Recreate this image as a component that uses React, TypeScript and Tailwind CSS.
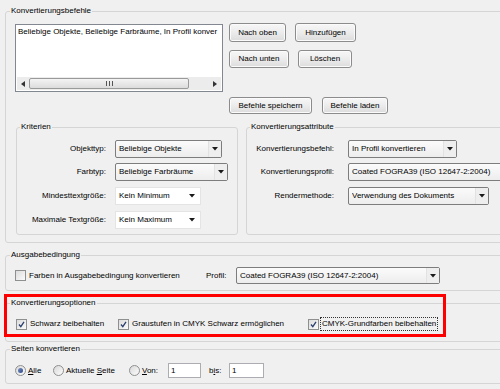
import type { ReactNode } from "react";

function Group({
  title,
  className,
  legendClass,
  children,
}: {
  title: string;
  className: string;
  legendClass: string;
  children?: ReactNode;
}) {
  return (
    <fieldset className={"shrink-0 border border-[#d5d5d5] rounded-[3px] " + className}>
      <legend className={"px-[1px] leading-[12px] " + legendClass}>{title}</legend>
      {children}
    </fieldset>
  );
}

function Btn({ label, className }: { label: string; className: string }) {
  return (
    <div
      className={
        "flex items-center justify-center rounded-[3px] border border-[#8c8c8c] bg-gradient-to-b from-[#f7f7f7] via-[#ececec] to-[#dcdcdc] shadow-[inset_0_0_0_1px_#fbfbfb] " +
        className
      }
    >
      {label}
    </div>
  );
}

function Arrow() {
  return (
    <svg width="6" height="4" viewBox="0 0 6 4">
      <path d="M0 0 H6 L3 3.5 Z" fill="#1a1a1a" />
    </svg>
  );
}

function Combo({ text, className, arrow = true }: { text: string; className: string; arrow?: boolean }) {
  return (
    <div
      className={
        "flex items-center rounded-[2px] border border-[#7d7d7d] bg-gradient-to-b from-[#fbfbfb] to-[#ededed] pl-[3px] " +
        className
      }
    >
      <span className="flex-1 whitespace-nowrap overflow-hidden">{text}</span>
      {arrow && (
        <span className="flex h-full w-[13px] items-center justify-center border-l border-[#e2e2e2] bg-[#eeeeee]">
          <Arrow />
        </span>
      )}
    </div>
  );
}

function FlatCombo({ text }: { text: string }) {
  return (
    <div className="flex h-[18px] w-[86px] items-center border border-[#e4e4e4] bg-white pl-[3px]">
      <span className="flex-1">{text}</span>
      <span className="mr-[5px] flex">
        <Arrow />
      </span>
    </div>
  );
}

function Check({
  label,
  focus = false,
  checked = true,
  className,
}: {
  label: string;
  focus?: boolean;
  checked?: boolean;
  className: string;
}) {
  return (
    <div className={"flex items-center " + className}>
      <span className="flex h-[11px] w-[11px] items-center justify-center border border-[#8e8f8f] bg-gradient-to-br from-[#dcdcdc] to-[#fbfbfb]">
        {checked && (
          <svg width="7" height="7" viewBox="0 0 7 7">
            <path d="M1 3.5 L2.8 5.6 L6 0.8" stroke="#2b3f6e" strokeWidth="1.3" fill="none" />
          </svg>
        )}
      </span>
      <span
        className={
          "ml-[1px] whitespace-nowrap px-[1px] " + (focus ? "border border-dotted border-[#333]" : "border border-transparent")
        }
      >
        {label}
      </span>
    </div>
  );
}

function Radio({ on = false }: { on?: boolean }) {
  return (
    <span className="flex h-[11px] w-[11px] items-center justify-center rounded-full border border-[#8e8f8f] bg-gradient-to-br from-[#d8d8d8] to-[#fdfdfd]">
      {on && <span className="h-[5px] w-[5px] rounded-full bg-gradient-to-br from-[#7b8fbf] to-[#2c4a8c]" />}
    </span>
  );
}

function ScrollBar() {
  return (
    <div className="mx-[1px] flex h-[13px] items-center bg-[#ececec]">
      <div className="flex w-[12px] justify-center">
        <svg width="4" height="6" viewBox="0 0 4 6">
          <path d="M4 0 V6 L0 3 Z" fill="#333" />
        </svg>
      </div>
      <div className="flex h-[11px] w-[160px] items-center justify-center rounded-[2px] border border-[#9a9a9a] bg-gradient-to-b from-[#f4f4f4] to-[#dcdcdc]">
        <svg width="7" height="5" viewBox="0 0 7 5">
          <path d="M0.5 0 V5 M3.5 0 V5 M6.5 0 V5" stroke="#555" strokeWidth="1" />
        </svg>
      </div>
      <div className="flex-1" />
      <div className="flex w-[12px] justify-center">
        <svg width="4" height="6" viewBox="0 0 4 6">
          <path d="M0 0 V6 L4 3 Z" fill="#333" />
        </svg>
      </div>
    </div>
  );
}

export default function App() {
  return (
    <div className="relative h-[389px] w-[500px] overflow-hidden bg-[#f0f0f0] font-['Liberation_Sans',Arial,sans-serif] text-[8px] leading-[12px] text-black">
      <div className="flex flex-col pl-[5px] pt-[5px]">
        {/* KONVERTIERUNGSBEFEHLE */}
        <Group title="Konvertierungsbefehle" className="h-[238px] w-[520px]" legendClass="ml-[4px]">
          <div className="pl-[9px] pt-[6px]">
            <div className="flex items-start">
              {/* list */}
              <div className="mt-[1px] grid h-[68px] w-[208px] shrink-0 grid-rows-[13px_1fr_13px] border border-[#828790] bg-white pb-[1px]">
                <div className="overflow-hidden whitespace-nowrap pl-[2px] pt-[1px]">
                  Beliebige Objekte, Beliebige Farbräume, In Profil konver
                </div>
                <div />
                <ScrollBar />
              </div>

              {/* buttons */}
              <div className="ml-[6px] flex flex-col">
                <div className="flex gap-[9px]">
                  <Btn label="Nach oben" className="h-[19px] w-[57px]" />
                  <Btn label="Hinzufügen" className="h-[19px] w-[61px]" />
                </div>
                <div className="mt-[8px] flex gap-[9px]">
                  <Btn label="Nach unten" className="h-[18px] w-[60px]" />
                  <Btn label="Löschen" className="h-[18px] w-[54px]" />
                </div>
                <div className="mt-[29px] flex gap-[10px]">
                  <Btn label="Befehle speichern" className="h-[17px] w-[83px]" />
                  <Btn label="Befehle laden" className="h-[17px] w-[66px]" />
                </div>
              </div>
            </div>

            <div className="mt-[7px] ml-[1px] flex gap-[8px]">
              {/* KRITERIEN */}
              <Group title="Kriterien" className="h-[114px] w-[222px]" legendClass="ml-[3px]">
                <div className="flex flex-col pt-[7px]">
                  <div className="flex h-[18px] items-center">
                    <span className="w-[89px] text-right">Objekttyp:</span>
                    <Combo text="Beliebige Objekte" className="ml-[9px] h-[18px] w-[107px]" />
                  </div>
                  <div className="mt-[5px] flex h-[18px] items-center">
                    <span className="w-[89px] text-right">Farbtyp:</span>
                    <Combo text="Beliebige Farbräume" className="ml-[9px] h-[18px] w-[113px] border-[#5f5f5f]" />
                  </div>
                  <div className="mt-[6px] flex h-[18px] items-center">
                    <span className="w-[89px] text-right">Mindesttextgröße:</span>
                    <span className="ml-[9px]">
                      <FlatCombo text="Kein Minimum" />
                    </span>
                  </div>
                  <div className="mt-[6px] flex h-[18px] items-center">
                    <span className="w-[89px] text-right">Maximale Textgröße:</span>
                    <span className="ml-[9px]">
                      <FlatCombo text="Kein Maximum" />
                    </span>
                  </div>
                </div>
              </Group>

              {/* KONVERTIERUNGSATTRIBUTE */}
              <Group title="Konvertierungsattribute" className="h-[114px] w-[280px]" legendClass="ml-[3px]">
                <div className="flex flex-col pt-[7px]">
                  <div className="flex h-[18px] items-center">
                    <span className="w-[87px] text-right">Konvertierungsbefehl:</span>
                    <Combo text="In Profil konvertieren" className="ml-[14px] h-[18px] w-[109px]" />
                  </div>
                  <div className="mt-[5px] flex h-[18px] items-center">
                    <span className="w-[87px] text-right">Konvertierungsprofil:</span>
                    <Combo text="Coated FOGRA39 (ISO 12647-2:2004)" className="ml-[14px] h-[18px] w-[175px]" arrow={false} />
                  </div>
                  <div className="mt-[6px] flex h-[18px] items-center">
                    <span className="w-[87px] text-right">Rendermethode:</span>
                    <Combo text="Verwendung des Dokuments" className="ml-[14px] h-[18px] w-[141px]" />
                  </div>
                </div>
              </Group>
            </div>
          </div>
        </Group>

        {/* AUSGABEBEDINGUNG */}
        <Group title="Ausgabebedingung" className="mt-[6px] h-[42px] w-[520px]" legendClass="ml-[4px]">
          <div className="flex h-[17px] items-center pl-[9px] mt-[6px]">
            <div className="w-[191px]">
              <Check label="Farben in Ausgabebedingung konvertieren" checked={false} className="" />
            </div>
            <span className="w-[30px]">Profil:</span>
            <Combo text="Coated FOGRA39 (ISO 12647-2:2004)" className="h-[17px] w-[204px]" />
          </div>
        </Group>

        {/* KONVERTIERUNGSOPTIONEN */}
        <Group title="Konvertierungsoptionen" className="mt-[6px] h-[45px] w-[520px]" legendClass="ml-[4px]">
          <div className="flex h-[14px] items-center pl-[10px] mt-[8px]">
            <Check label="Schwarz beibehalten" className="w-[102px]" />
            <Check label="Graustufen in CMYK Schwarz ermöglichen" className="w-[190px]" />
            <Check label="CMYK-Grundfarben beibehalten" focus className="" />
          </div>
        </Group>

        {/* SEITEN KONVERTIEREN */}
        <Group title="Seiten konvertieren" className="mt-[1px] h-[41px] w-[520px]" legendClass="ml-[4px]">
          <div className="flex h-[15px] items-center pl-[9px] mt-[8px]">
            <div className="flex w-[38px] items-center">
              <Radio on />
              <span className="ml-[2px]">
                <span className="underline">A</span>lle
              </span>
            </div>
            <div className="flex w-[76px] items-center">
              <Radio />
              <span className="ml-[2px]">
                Aktuelle <span className="underline">S</span>eite
              </span>
            </div>
            <div className="flex w-[39px] items-center">
              <Radio />
              <span className="ml-[2px]">
                <span className="underline">V</span>on:
              </span>
            </div>
            <div className="flex h-[15px] w-[33px] items-center border border-[#abadb3] bg-white pl-[2px]">1</div>
            <span className="ml-[8px] w-[20px]">
              b<span className="underline">i</span>s:
            </span>
            <div className="flex h-[15px] w-[35px] items-center border border-[#abadb3] bg-white pl-[2px]">1</div>
          </div>
        </Group>
      </div>

      {/* highlight */}
      <div className="absolute left-[4px] top-[294px] h-[43px] w-[442px] border-[3px] border-[#ff0000]" />
    </div>
  );
}
